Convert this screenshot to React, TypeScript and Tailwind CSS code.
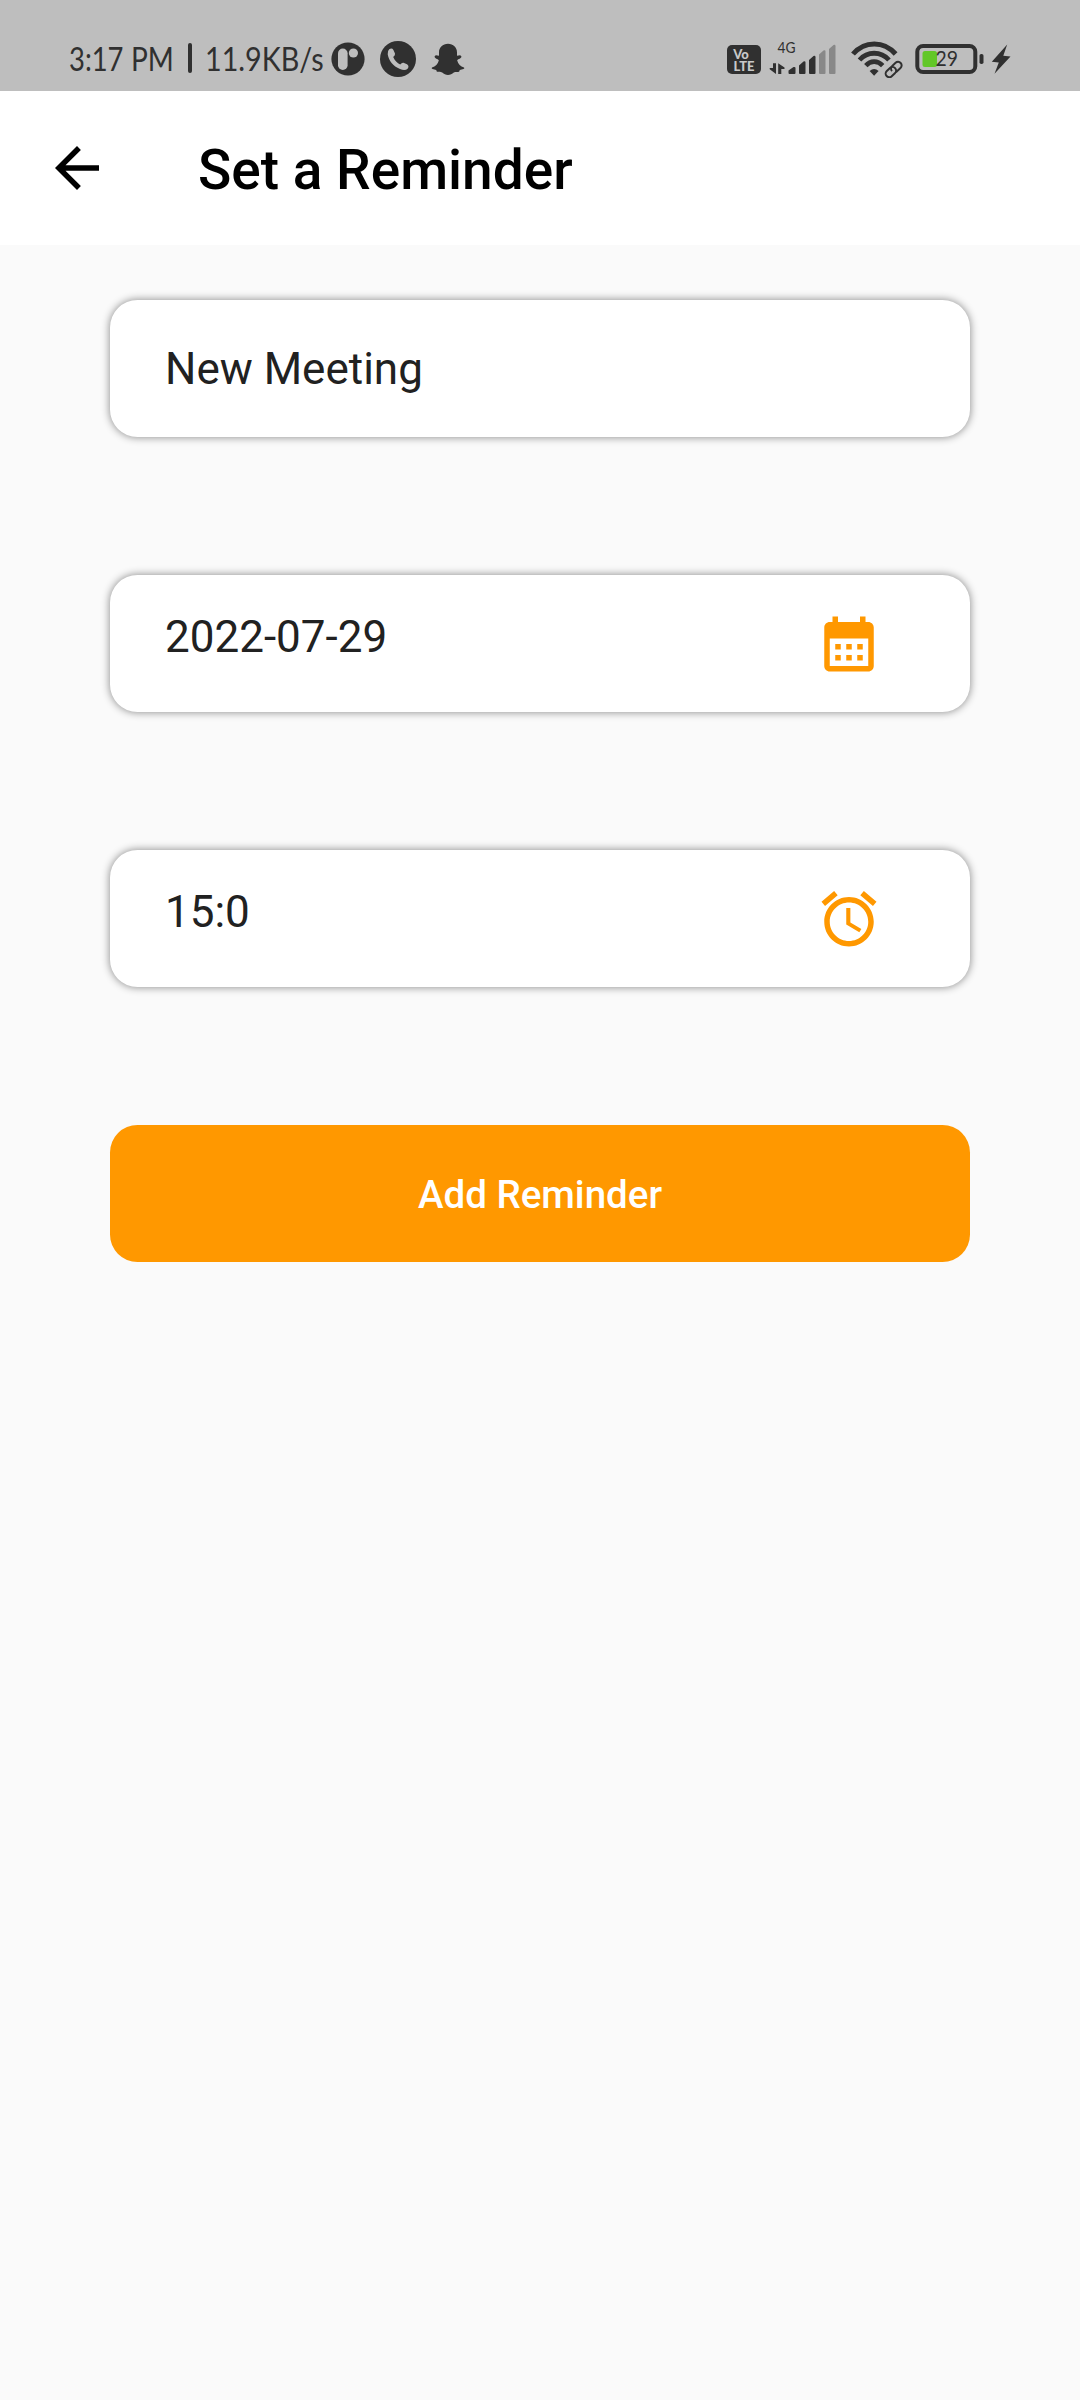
import React from "react";

function StatusBar() {
  return (
    <div className="flex h-[91px] items-start bg-[#bebebe] pl-[69px] pt-[38px] font-['Lato',sans-serif] text-[#303030]">
      <div className="flex h-[40px] w-[262px] shrink-0 items-center whitespace-pre text-[33px] leading-[40px]">
        <span className="w-[62px] shrink-0 origin-left scale-x-[0.83]">3:17</span>
        <span className="w-[57px] shrink-0 origin-left scale-x-[0.85]">PM</span>
        <span className="h-[30px] w-[4px] shrink-0 rounded-sm bg-[#303030]" />
        <span className="ml-[13px] shrink-0 origin-left scale-x-[0.87]">11.9KB/s</span>
      </div>
      <svg className="mt-[4px] h-[34px] w-[34px] shrink-0" viewBox="0 0 34 34">
        <circle cx="17" cy="17" r="16.6" fill="#303030" />
        <rect x="7" y="6.5" width="9.6" height="21.5" rx="4.8" fill="#bebebe" />
        <circle cx="22.4" cy="11" r="4.6" fill="#bebebe" />
      </svg>
      <svg className="ml-[15px] mt-[3px] h-[36px] w-[36px] shrink-0" viewBox="0 0 36 36">
        <circle cx="18" cy="18" r="18" fill="#303030" />
        <path
          d="M9.2 8.2 Q12 6.5 13.4 9 L15 12.5 Q15.5 14 13.2 16 C14.7 19.5 17.2 22 20.2 23.6 Q22 21.3 23.5 21.8 L27 23.2 Q29.6 24.8 27.6 27.7 Q25 30 20 28 C13 25.2 8.7 19.5 7.7 13.2 Q7.4 9.8 9.2 8.2Z"
          fill="#bebebe"
        />
      </svg>
      <svg className="ml-[15px] mt-[5px] h-[33px] w-[34px] shrink-0" viewBox="0 0 34 33">
        <path
          d="M17 .8 C22.2 .8 26 4.4 26 9.5 V12.8 L29 12.2 Q31 12.6 30.3 14.2 C29.5 16 26.2 16 26.2 17.5 C27.2 21.2 29.5 23.4 33 24.4 Q34 25 32.5 26 L28.8 27 L28.1 28.8 C26.5 29.3 24.5 28.7 22.8 29.6 C21 31 19.3 32 17 32 S13 31 11.2 29.6 C9.5 28.7 7.5 29.3 5.9 28.8 L5.2 27 L1.5 26 Q0 25 1 24.4 C4.5 23.4 6.8 21.2 7.8 17.5 C7.8 16 4.5 16 3.7 14.2 Q3 12.6 5 12.2 L8 12.8 V9.5 C8 4.4 11.8 .8 17 .8Z"
          fill="#303030"
        />
      </svg>
      <div className="ml-[262px] mt-[7px] flex h-[29px] w-[34px] shrink-0 flex-col items-center rounded-[5px] bg-[#303030] pt-[3px] text-[13px] font-black leading-[12px] text-[#c8c8c8]">
        <span className="-ml-[6px]">Vo</span>
        <span>LTE</span>
      </div>
      <svg className="ml-[8px] h-[40px] w-[70px] shrink-0" viewBox="0 0 70 40" fill="#303030">
        <text x="8.5" y="14.5" fontFamily="Lato" fontSize="15.5" textLength="18" lengthAdjust="spacingAndGlyphs">
          4G
        </text>
        <path d="M4 25.2h3V36L0.7 31.2V30H4Z M9.2 36V25.2L15.5 29.6V31H12.3V36Z" />
        <path d="M19.5 36v-3.5l5-3.5q2-.5 2 1V35q0 1-1 1h-5q-1 0-1-1Z" />
        <path d="M30 27.5l4.5-4q2-.8 2 1.2V35q0 1-1 1H31q-1 0-1-1Z" />
        <path d="M40 22l4.5-4q2-.8 2 1.2V35q0 1-1 1H41q-1 0-1-1Z" />
        <path d="M50 16.5l4.5-4q2-.8 2 1.2V35q0 1-1 1H51q-1 0-1-1Z" fill="#888" />
        <path d="M60 11l4.5-4q2-.8 2 1.2V35q0 1-1 1H61q-1 0-1-1Z" fill="#888" />
      </svg>
      <svg className="ml-[12px] h-[40px] w-[52px] shrink-0" viewBox="0 0 52 40" fill="none" stroke="#303030">
        <path d="M2 16 C13.5 2.5 33 2.5 44.6 16" strokeWidth="5" />
        <path d="M8.5 22 C16.5 13 29.8 13 38 22" strokeWidth="4.8" />
        <path d="M14.8 27.6 C19.5 22.3 26.7 22.3 31.7 27.6" strokeWidth="4.6" />
        <path d="M18.6 33 Q23.1 29 27.6 33 L23.1 37.8Z" fill="#303030" stroke="none" />
        <g transform="rotate(-43 42.5 31.5)" strokeWidth="2">
          <rect x="33" y="28" width="11.6" height="7.2" rx="3.6" fill="#bebebe" />
          <path d="M42.4 35.2H48.6a3.6 3.6 0 0 0 0-7.2H44a3.6 3.6 0 0 0-3.6 3.6" />
        </g>
      </svg>
      <svg className="ml-[12px] h-[40px] w-[98px] shrink-0" viewBox="0 0 98 40">
        <rect x="2.3" y="8" width="58" height="26" rx="5.8" fill="none" stroke="#303030" strokeWidth="4" />
        <rect x="7.5" y="13" width="14.5" height="16" rx="2.5" fill="#62c728" />
        <rect x="64.5" y="16" width="4" height="10" rx="1.8" fill="#303030" />
        <text x="20.5" y="28" fontFamily="Lato" fontSize="22" textLength="22.5" lengthAdjust="spacingAndGlyphs" fill="#303030">
          29
        </text>
        <path d="M92.2 6.5 76.8 23.7 83.8 24.4 79.5 35.8 95.5 18.5 88.3 17.8Z" fill="#303030" />
      </svg>
    </div>
  );
}

const ICON_PATHS = {
  back: "M20 11H7.83l5.59-5.59L12 4l-8 8 8 8 1.41-1.41L7.83 13H20v-2z",
  calendar:
    "M19 4h-1V2h-2v2H8V2H6v2H5c-1.11 0-1.99.9-1.99 2L3 20c0 1.1.89 2 2 2h14c1.1 0 2-.9 2-2V6c0-1.1-.9-2-2-2zm0 16H5V10h14v10zM9 14H7v-2h2v2zm4 0h-2v-2h2v2zm4 0h-2v-2h2v2zm-8 4H7v-2h2v2zm4 0h-2v-2h2v2zm4 0h-2v-2h2v2z",
  alarm:
    "M22 5.72l-4.6-3.86-1.29 1.53 4.6 3.86L22 5.72zM7.88 3.39L6.6 1.86 2 5.71l1.29 1.53 4.59-3.85zM12.5 8H11v6l4.75 2.85.75-1.23-4-2.37V8zM12 4c-4.97 0-9 4.03-9 9s4.02 9 9 9c4.97 0 9-4.03 9-9s-4.03-9-9-9zm0 16c-3.87 0-7-3.13-7-7s3.13-7 7-7 7 3.13 7 7-3.13 7-7 7z",
};

function Icon({ name, className }: { name: keyof typeof ICON_PATHS; className: string }) {
  return (
    <svg viewBox="0 0 24 24" fill="currentColor" className={`h-[66px] w-[66px] shrink-0 ${className}`}>
      <path d={ICON_PATHS[name]} />
    </svg>
  );
}

function Field({ value, icon }: { value: string; icon?: "calendar" | "alarm" }) {
  return (
    <div className="flex h-[137px] items-center justify-between rounded-[27.5px] bg-white pl-[55px] pr-[88px] shadow-[0_0_9px_rgba(0,0,0,0.48)]">
      <span
        className={
          icon
            ? "mb-[13px] text-[44px] leading-[52px]"
            : "mt-[1px] text-[44px] leading-[52px]"
        }
      >
        {value}
      </span>
      {icon && <Icon name={icon} className="text-[#ff9800]" />}
    </div>
  );
}

export default function App() {
  return (
    <div className="h-[2400px] w-[1080px] overflow-hidden bg-[#fafafa] font-['Roboto',sans-serif] text-[#212121]">
      <StatusBar />
      <header className="flex h-[154px] items-center bg-white pl-[44px] text-black">
        <Icon name="back" className="" />
        <h1 className="ml-[88px] mt-[3px] text-[55px] font-medium leading-[64px]">Set a Reminder</h1>
      </header>
      <main className="flex flex-col gap-[138px] px-[110px] pt-[55px]">
        <Field value="New Meeting" />
        <Field value="2022-07-29" icon="calendar" />
        <Field value="15:0" icon="alarm" />
        <button className="h-[137px] rounded-[27.5px] bg-[#ff9800] pt-[2px] text-[38.5px] font-medium text-white">
          Add Reminder
        </button>
      </main>
    </div>
  );
}
